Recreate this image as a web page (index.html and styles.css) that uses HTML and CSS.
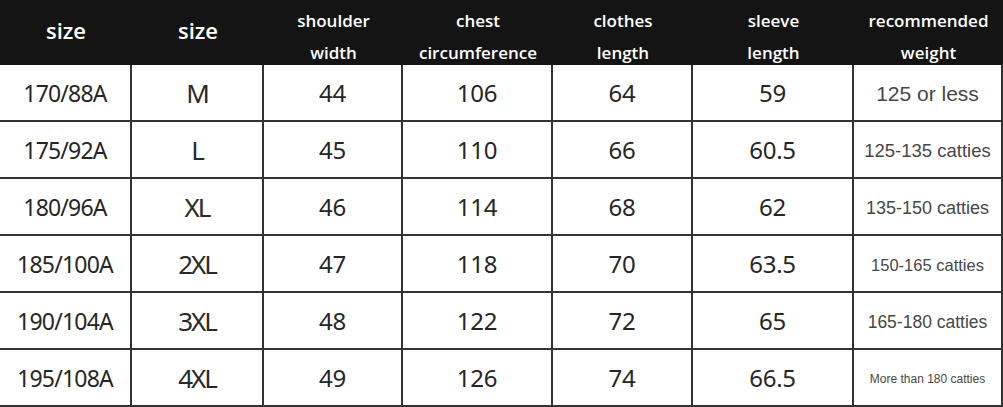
FILE: index.html
```html
<!DOCTYPE html>
<html>
<head>
<meta charset="utf-8">
<link rel="stylesheet" href="styles.css">
</head>
<body>
<div class="table">
  <div class="th big">size</div>
  <div class="th big">size</div>
  <div class="th">shoulder<br>width</div>
  <div class="th">chest<br>circumference</div>
  <div class="th">clothes<br>length</div>
  <div class="th">sleeve<br>length</div>
  <div class="th">recommended<br>weight</div>

  <div class="td code">170/88A</div><div class="td sz">M</div><div class="td">44</div><div class="td">106</div><div class="td">64</div><div class="td">59</div><div class="td w w1">125 or less</div>
  <div class="td code">175/92A</div><div class="td sz">L</div><div class="td">45</div><div class="td">110</div><div class="td">66</div><div class="td">60.5</div><div class="td w w2">125-135 catties</div>
  <div class="td code">180/96A</div><div class="td sz">XL</div><div class="td">46</div><div class="td">114</div><div class="td">68</div><div class="td">62</div><div class="td w w3">135-150 catties</div>
  <div class="td code">185/100A</div><div class="td sz">2XL</div><div class="td">47</div><div class="td">118</div><div class="td">70</div><div class="td">63.5</div><div class="td w w4">150-165 catties</div>
  <div class="td code">190/104A</div><div class="td sz">3XL</div><div class="td">48</div><div class="td">122</div><div class="td">72</div><div class="td">65</div><div class="td w w5">165-180 catties</div>
  <div class="td code">195/108A</div><div class="td sz">4XL</div><div class="td">49</div><div class="td">126</div><div class="td">74</div><div class="td">66.5</div><div class="td w w6">More than 180 catties</div>
</div>
</body>
</html>
```

FILE: styles.css
```css
html, body {
  margin: 0;
  padding: 0;
  background: #ffffff;
}
body {
  width: 1003px;
  height: 407px;
  overflow: hidden;
}
.table {
  display: grid;
  grid-template-columns: 132px 132px 139px 150px 140px 161px 149px;
  grid-template-rows: 65px repeat(6, 57px);
}
.th {
  box-sizing: border-box;
  background: #141414;
  color: #ffffff;
  font-family: "Open Sans", "Noto Sans", sans-serif;
  font-weight: 600;
  font-size: 17px;
  line-height: 32px;
  display: flex;
  align-items: center;
  justify-content: center;
  text-align: center;
  padding-top: 8px;
}
.th.big {
  font-size: 22px;
  padding-top: 0;
  padding-bottom: 6px;
}
.td {
  box-sizing: border-box;
  border-right: 2px solid #333333;
  border-bottom: 2px solid #333333;
  display: flex;
  align-items: center;
  justify-content: center;
  font-family: "Noto Sans", "DejaVu Sans", sans-serif;
  font-size: 24px;
  color: #262626;
  letter-spacing: -0.3px;
}
.td.code {
  font-size: 23px;
  letter-spacing: -0.8px;
}
.td.sz {
  font-size: 26px;
  font-weight: 400;
  letter-spacing: -2px;
  color: #2a2a2a;
}
.td.w {
  font-family: "Liberation Sans", Arial, sans-serif;
  color: #474747;
  letter-spacing: 0;
  padding-top: 3px;
}
.w1 { font-size: 21px; }
.w2 { font-size: 18.5px; }
.w3 { font-size: 18px; }
.w4 { font-size: 16.5px; }
.w5 { font-size: 17.5px; }
.w6 { font-size: 12px; }
```
